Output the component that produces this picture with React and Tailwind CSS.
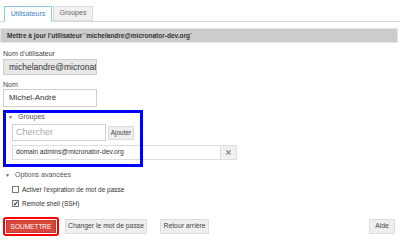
import React from "react";

const App = () => {
  return (
    <div
      className="w-[400px] h-[241px] bg-white overflow-hidden text-[#333]"
      style={{ fontFamily: '"Liberation Sans", Arial, sans-serif' }}
    >
      {/* tabs */}
      <div className="flex items-end pt-[6px] pl-[4px] pr-[2px] border-b border-[#d8d8d8] h-[22px]">
        <div className="h-[16px] w-[48px] flex items-center justify-center border border-[#8cc8ec] border-b-white bg-white text-[7px] text-[#3b82c4] -mb-px">
          Utilisateurs
        </div>
        <div className="h-[15px] w-[40px] ml-px flex items-center justify-center border border-[#dcdcdc] bg-[#f1f1f1] text-[7px] text-[#666]">
          Groupes
        </div>
      </div>

      <div className="mt-[6px] mr-[2px] h-[15px] bg-[#cccccc] border border-[#e6e6e6] flex items-center pl-[6px] text-[6.5px] font-bold text-[#333]">
        Mettre à jour l'utilisateur `michelandre@micronator-dev.org`
      </div>

      <div className="pl-[3px]">
        <div className="mt-[6px] text-[7px] text-[#444] leading-[9px]">Nom d'utilisateur</div>
        <div className="mt-[1px] w-[94px] h-[16px] border border-[#cfcfcf] bg-[#e8e8e8] flex items-center pl-[5px] text-[8.5px] text-[#333] overflow-hidden whitespace-nowrap">
          michelandre@micronatc
        </div>
        <div className="mt-[6px] text-[7px] text-[#444] leading-[8px]">Nom</div>
        <div className="w-[94px] h-[18px] border border-[#cfcfcf] bg-white flex items-center pl-[5px] text-[8px] text-[#333]">
          Michel-André
        </div>

        {/* highlighted group block */}
        <div className="relative mt-[3px] w-[140px] h-[57px] pt-[3px] pl-[3px] after:content-[''] after:absolute after:inset-0 after:border-[3px] after:border-[#0000ff] after:pointer-events-none">
          <div className="flex items-center text-[7px] text-[#555] h-[9px] pl-[2px]">
            <span className="text-[5px] mr-[5px] text-[#666]">▼</span>Groupes
          </div>
          <div className="pl-[6px] mt-[2px]">
            <div className="flex items-center">
              <div className="w-[94px] h-[17px] shrink-0 border border-[#d0d0d0] bg-white flex items-center pl-[3px] text-[9px] text-[#aaa]">
                Chercher
              </div>
              <div className="ml-[2px] w-[26px] h-[14px] shrink-0 border border-[#dcdcdc] bg-[#eeeeee] flex items-center justify-center text-[6.5px] text-[#444]">
                Ajouter
              </div>
            </div>
            <div className="mt-[4px] flex w-[225px]">
              <div className="w-[209px] h-[15px] shrink-0 border border-[#dedede] bg-white flex items-center pl-[3px] text-[6.7px] text-[#333]">
                domain admins@micronator-dev.org
              </div>
              <div className="w-[16px] h-[15px] shrink-0 border border-l-0 border-[#dedede] bg-[#f0f0f0] flex items-center justify-center">
                <svg width="5" height="5" viewBox="0 0 5 5">
                  <path d="M0.5 0.5L4.5 4.5M4.5 0.5L0.5 4.5" stroke="#888" strokeWidth="1.2" />
                </svg>
              </div>
            </div>
          </div>
        </div>
      </div>

      <div className="mt-[4px] pl-[5px]">
        <div className="flex items-center text-[7px] text-[#555] h-[9px]">
          <span className="text-[5px] mr-[5px] text-[#666]">▼</span>Options avancées
        </div>
        <div className="mt-[5px] pl-[7px] flex items-center text-[6.5px] text-[#333] h-[9px]">
          <span className="w-[7px] h-[7px] border border-[#777] bg-white mr-[3px]"></span>
          Activer l'expiration de mot de passe
        </div>
        <div className="mt-[5px] pl-[7px] flex items-center text-[6.5px] text-[#333] h-[9px]">
          <span className="w-[7px] h-[7px] border border-[#777] bg-white mr-[3px] flex items-center justify-center text-[7px] leading-none">
            ✔
          </span>
          Remote shell (SSH)
        </div>
      </div>

      <div className="mt-[9px] pl-[3px] pr-[5px] flex items-center">
        <div className="w-[56px] h-[19px] border-[2px] border-[#ff0000] rounded-[3px] flex items-center justify-center">
          <div className="w-[50px] h-[13px] bg-[#d9473b] border border-[#c23a30] flex items-center justify-center text-[6.5px] text-white">
            SOUMETTRE
          </div>
        </div>
        <div className="ml-[6px] w-[82px] h-[15px] border border-[#dcdcdc] bg-[#efefef] flex items-center justify-center text-[6.8px] text-[#444]">
          Changer le mot de passe
        </div>
        <div className="ml-[13px] w-[49px] h-[15px] border border-[#dcdcdc] bg-[#efefef] flex items-center justify-center text-[6.8px] text-[#444]">
          Retour arrière
        </div>
        <div className="ml-auto w-[26px] h-[15px] border border-[#dcdcdc] bg-[#efefef] flex items-center justify-center text-[6.8px] text-[#444]">
          Aide
        </div>
      </div>
    </div>
  );
};

export default App;
